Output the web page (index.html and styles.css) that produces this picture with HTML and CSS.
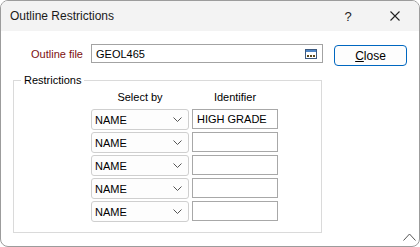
FILE: index.html
```html
<!DOCTYPE html>
<html>
<head>
<meta charset="utf-8">
<link rel="stylesheet" href="styles.css">
</head>
<body>
<div class="window">
  <div class="titlebar">
    <span class="title">Outline Restrictions</span>
    <span class="tb-help">?</span>
    <span class="tb-close">
      <svg width="10" height="10" viewBox="0 0 10 10"><path d="M0.5 0.5 L9.5 9.5 M9.5 0.5 L0.5 9.5" stroke="#222" stroke-width="1.1" fill="none"/></svg>
    </span>
  </div>
  <div class="content">
    <div class="left">
      <div class="file-row">
        <label class="file-label">Outline file</label>
        <div class="file-input">
          <span class="file-value">GEOL465</span>
          <svg class="browse" width="12" height="10" viewBox="0 0 12 10">
            <rect x="0.5" y="0.5" width="11" height="9" fill="#fff" stroke="#3d5a80"/>
            <rect x="1" y="1" width="10" height="2" fill="#4f86c6"/>
            <rect x="2" y="6" width="2" height="2" fill="#5c4a1e"/>
            <rect x="5" y="6" width="2" height="2" fill="#5c4a1e"/>
            <rect x="8" y="6" width="2" height="2" fill="#5c4a1e"/>
          </svg>
        </div>
      </div>
      <fieldset class="group">
        <legend class="legend">Restrictions</legend>
        <div class="grid">
          <div class="hdr">Select by</div>
          <div class="hdr">Identifier</div>
          <div class="sel"><span>NAME</span><svg class="chev" width="9" height="5" viewBox="0 0 9 5"><path d="M0.5 0.5 L4.5 4.5 L8.5 0.5" stroke="#555" fill="none"/></svg></div>
          <div class="txt">HIGH GRADE</div>
          <div class="sel"><span>NAME</span><svg class="chev" width="9" height="5" viewBox="0 0 9 5"><path d="M0.5 0.5 L4.5 4.5 L8.5 0.5" stroke="#555" fill="none"/></svg></div>
          <div class="txt"></div>
          <div class="sel"><span>NAME</span><svg class="chev" width="9" height="5" viewBox="0 0 9 5"><path d="M0.5 0.5 L4.5 4.5 L8.5 0.5" stroke="#555" fill="none"/></svg></div>
          <div class="txt"></div>
          <div class="sel"><span>NAME</span><svg class="chev" width="9" height="5" viewBox="0 0 9 5"><path d="M0.5 0.5 L4.5 4.5 L8.5 0.5" stroke="#555" fill="none"/></svg></div>
          <div class="txt"></div>
          <div class="sel"><span>NAME</span><svg class="chev" width="9" height="5" viewBox="0 0 9 5"><path d="M0.5 0.5 L4.5 4.5 L8.5 0.5" stroke="#555" fill="none"/></svg></div>
          <div class="txt"></div>
        </div>
      </fieldset>
    </div>
    <div class="right">
      <button class="btn"><u>C</u>lose</button>
    </div>
  </div>
  <svg class="grip" width="13" height="8" viewBox="0 0 13 8"><path d="M0.5 7.5 L6.5 1 L12.5 7.5" stroke="#555" fill="none"/></svg>
</div>
</body>
</html>
```

FILE: styles.css
```css
html, body {
  margin: 0;
  padding: 0;
  background: #fff;
}
body {
  font-family: "Liberation Sans", Arial, sans-serif;
  font-size: 11px;
  color: #000;
}
.window {
  position: relative;
  width: 420px;
  height: 247px;
  box-sizing: border-box;
  border: 1px solid #9c9c9c;
  border-radius: 8px;
  background: #fff;
  overflow: hidden;
  display: flex;
  flex-direction: column;
}
.titlebar {
  height: 30px;
  flex: none;
  background: #f3f3f3;
  display: flex;
  align-items: center;
  padding-left: 9px;
}
.title {
  font-size: 12px;
  color: #1a1a1a;
  flex: 1;
}
.tb-help {
  width: 46px;
  text-align: center;
  font-size: 13px;
  color: #222;
  margin-right: 2px;
}
.tb-close {
  width: 44px;
  display: flex;
  justify-content: center;
  align-items: center;
  margin-right: 2px;
}
.content {
  display: flex;
  padding: 13px 0 0 12px;
}
.left {
  width: 310px;
}
.file-row {
  display: flex;
  align-items: center;
  gap: 8px;
}
.file-label {
  width: 70px;
  text-align: right;
  color: #7d1010;
  font-size: 11px;
}
.file-input {
  width: 232px;
  height: 19px;
  box-sizing: border-box;
  border: 1px solid #a3a3a3;
  display: flex;
  align-items: center;
  padding: 0 5px 0 4px;
}
.file-value {
  flex: 1;
}
.browse {
  display: block;
}
.group {
  margin: 10px 0 0 0;
  width: 309px;
  height: 160px;
  box-sizing: border-box;
  border: 1px solid #dadada;
  padding: 3px 0 0 7px;
}
.legend {
  padding: 0 3px;
  line-height: 14px;
  font-size: 11px;
}
.grid {
  margin-left: 70px;
  display: grid;
  grid-template-columns: 98px 86px;
  grid-template-rows: 17px;
  grid-auto-rows: 21px;
  column-gap: 3px;
  row-gap: 2px;
}
.hdr {
  text-align: center;
  line-height: 14px;
}
.sel {
  box-sizing: border-box;
  height: 21px;
  border: 1px solid #cfcfcf;
  border-radius: 3px;
  background: #fdfdfd;
  display: flex;
  align-items: center;
  padding: 0 6px 0 3px;
}
.sel span {
  flex: 1;
}
.chev {
  display: block;
}
.txt {
  box-sizing: border-box;
  height: 20px;
  border: 1px solid #a8a8a8;
  background: #fff;
  display: flex;
  align-items: center;
  padding-left: 4px;
}
.right {
  padding-left: 11px;
  padding-top: 1px;
}
.btn {
  width: 73px;
  height: 21px;
  box-sizing: border-box;
  border: 1px solid #0067c0;
  border-radius: 4px;
  background: #fdfdfd;
  font-family: "Liberation Sans", Arial, sans-serif;
  font-size: 12px;
  color: #000;
  padding: 0;
}
.grip {
  position: absolute;
  right: 3px;
  bottom: 5px;
}
```
